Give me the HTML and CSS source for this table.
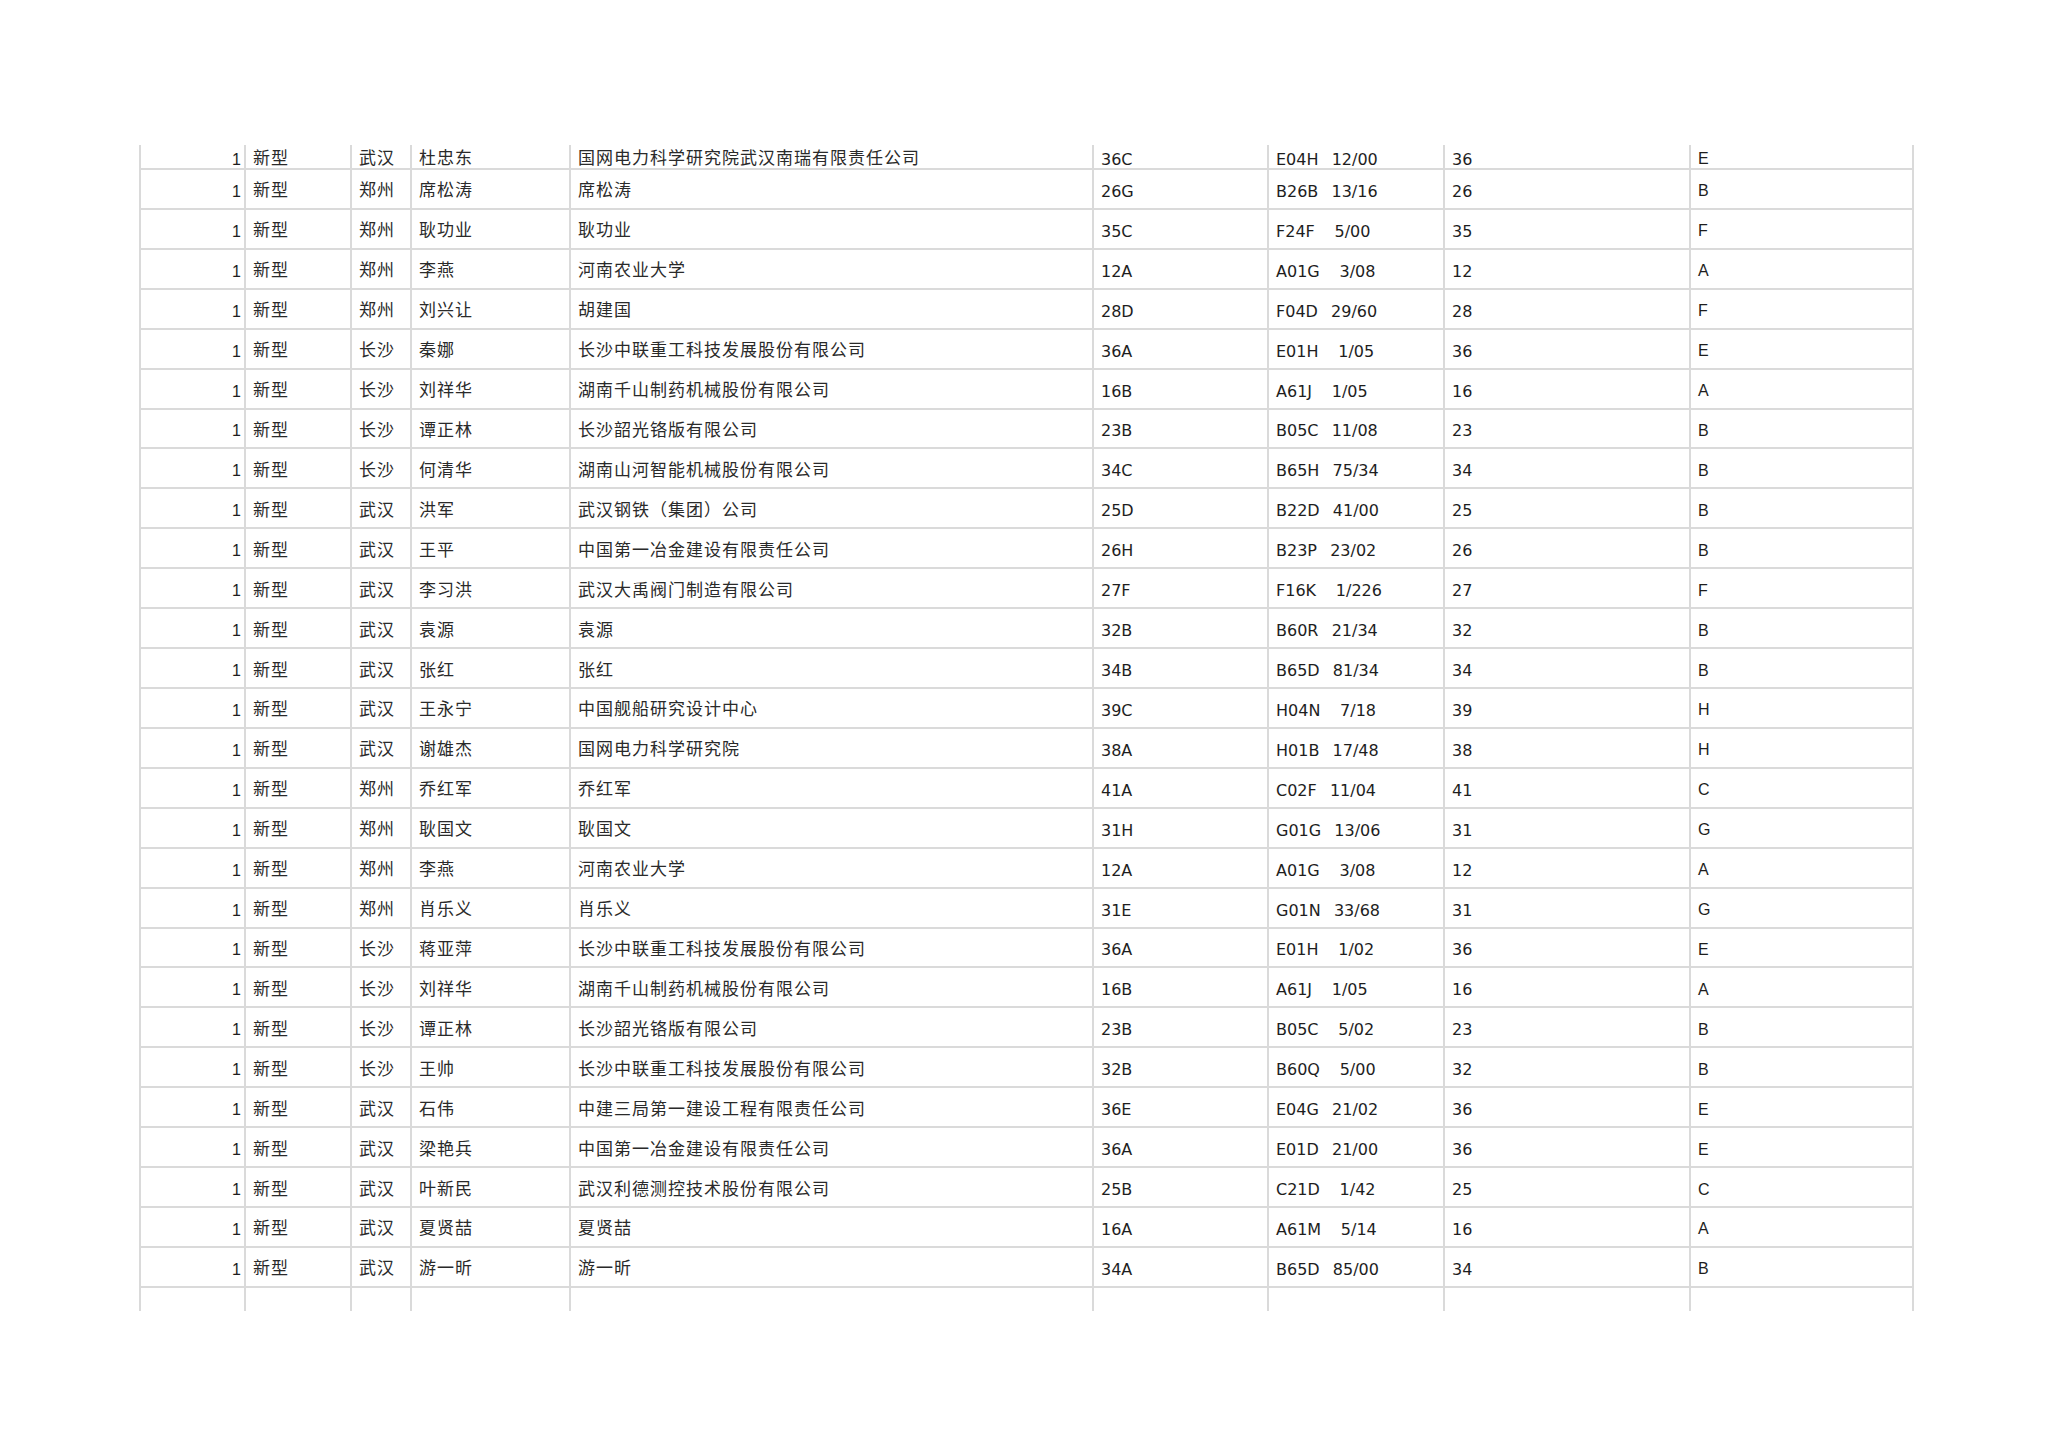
FILE: index.html
```html
<!DOCTYPE html>
<html lang="zh-CN">
<head>
<meta charset="utf-8">
<title>新型</title>
<link rel="stylesheet" href="styles.css">
</head>
<body>
<div class="page">
<div class="sheet">
<div class="row first"><div class="c num">1</div><div class="c cjk">新型</div><div class="c cjk">武汉</div><div class="c cjk">杜忠东</div><div class="c cjk">国网电力科学研究院武汉南瑞有限责任公司</div><div class="c lat">36C</div><div class="c lat">E04H  12/00</div><div class="c lat">36</div><div class="c ar">E</div></div>
<div class="row"><div class="c num">1</div><div class="c cjk">新型</div><div class="c cjk">郑州</div><div class="c cjk">席松涛</div><div class="c cjk">席松涛</div><div class="c lat">26G</div><div class="c lat">B26B  13/16</div><div class="c lat">26</div><div class="c ar">B</div></div>
<div class="row"><div class="c num">1</div><div class="c cjk">新型</div><div class="c cjk">郑州</div><div class="c cjk">耿功业</div><div class="c cjk">耿功业</div><div class="c lat">35C</div><div class="c lat">F24F   5/00</div><div class="c lat">35</div><div class="c ar">F</div></div>
<div class="row"><div class="c num">1</div><div class="c cjk">新型</div><div class="c cjk">郑州</div><div class="c cjk">李燕</div><div class="c cjk">河南农业大学</div><div class="c lat">12A</div><div class="c lat">A01G   3/08</div><div class="c lat">12</div><div class="c ar">A</div></div>
<div class="row"><div class="c num">1</div><div class="c cjk">新型</div><div class="c cjk">郑州</div><div class="c cjk">刘兴让</div><div class="c cjk">胡建国</div><div class="c lat">28D</div><div class="c lat">F04D  29/60</div><div class="c lat">28</div><div class="c ar">F</div></div>
<div class="row"><div class="c num">1</div><div class="c cjk">新型</div><div class="c cjk">长沙</div><div class="c cjk">秦娜</div><div class="c cjk">长沙中联重工科技发展股份有限公司</div><div class="c lat">36A</div><div class="c lat">E01H   1/05</div><div class="c lat">36</div><div class="c ar">E</div></div>
<div class="row"><div class="c num">1</div><div class="c cjk">新型</div><div class="c cjk">长沙</div><div class="c cjk">刘祥华</div><div class="c cjk">湖南千山制药机械股份有限公司</div><div class="c lat">16B</div><div class="c lat">A61J   1/05</div><div class="c lat">16</div><div class="c ar">A</div></div>
<div class="row"><div class="c num">1</div><div class="c cjk">新型</div><div class="c cjk">长沙</div><div class="c cjk">谭正林</div><div class="c cjk">长沙韶光铬版有限公司</div><div class="c lat">23B</div><div class="c lat">B05C  11/08</div><div class="c lat">23</div><div class="c ar">B</div></div>
<div class="row"><div class="c num">1</div><div class="c cjk">新型</div><div class="c cjk">长沙</div><div class="c cjk">何清华</div><div class="c cjk">湖南山河智能机械股份有限公司</div><div class="c lat">34C</div><div class="c lat">B65H  75/34</div><div class="c lat">34</div><div class="c ar">B</div></div>
<div class="row"><div class="c num">1</div><div class="c cjk">新型</div><div class="c cjk">武汉</div><div class="c cjk">洪军</div><div class="c cjk">武汉钢铁（集团）公司</div><div class="c lat">25D</div><div class="c lat">B22D  41/00</div><div class="c lat">25</div><div class="c ar">B</div></div>
<div class="row"><div class="c num">1</div><div class="c cjk">新型</div><div class="c cjk">武汉</div><div class="c cjk">王平</div><div class="c cjk">中国第一冶金建设有限责任公司</div><div class="c lat">26H</div><div class="c lat">B23P  23/02</div><div class="c lat">26</div><div class="c ar">B</div></div>
<div class="row"><div class="c num">1</div><div class="c cjk">新型</div><div class="c cjk">武汉</div><div class="c cjk">李习洪</div><div class="c cjk">武汉大禹阀门制造有限公司</div><div class="c lat">27F</div><div class="c lat">F16K   1/226</div><div class="c lat">27</div><div class="c ar">F</div></div>
<div class="row"><div class="c num">1</div><div class="c cjk">新型</div><div class="c cjk">武汉</div><div class="c cjk">袁源</div><div class="c cjk">袁源</div><div class="c lat">32B</div><div class="c lat">B60R  21/34</div><div class="c lat">32</div><div class="c ar">B</div></div>
<div class="row"><div class="c num">1</div><div class="c cjk">新型</div><div class="c cjk">武汉</div><div class="c cjk">张红</div><div class="c cjk">张红</div><div class="c lat">34B</div><div class="c lat">B65D  81/34</div><div class="c lat">34</div><div class="c ar">B</div></div>
<div class="row"><div class="c num">1</div><div class="c cjk">新型</div><div class="c cjk">武汉</div><div class="c cjk">王永宁</div><div class="c cjk">中国舰船研究设计中心</div><div class="c lat">39C</div><div class="c lat">H04N   7/18</div><div class="c lat">39</div><div class="c ar">H</div></div>
<div class="row"><div class="c num">1</div><div class="c cjk">新型</div><div class="c cjk">武汉</div><div class="c cjk">谢雄杰</div><div class="c cjk">国网电力科学研究院</div><div class="c lat">38A</div><div class="c lat">H01B  17/48</div><div class="c lat">38</div><div class="c ar">H</div></div>
<div class="row"><div class="c num">1</div><div class="c cjk">新型</div><div class="c cjk">郑州</div><div class="c cjk">乔红军</div><div class="c cjk">乔红军</div><div class="c lat">41A</div><div class="c lat">C02F  11/04</div><div class="c lat">41</div><div class="c ar">C</div></div>
<div class="row"><div class="c num">1</div><div class="c cjk">新型</div><div class="c cjk">郑州</div><div class="c cjk">耿国文</div><div class="c cjk">耿国文</div><div class="c lat">31H</div><div class="c lat">G01G  13/06</div><div class="c lat">31</div><div class="c ar">G</div></div>
<div class="row"><div class="c num">1</div><div class="c cjk">新型</div><div class="c cjk">郑州</div><div class="c cjk">李燕</div><div class="c cjk">河南农业大学</div><div class="c lat">12A</div><div class="c lat">A01G   3/08</div><div class="c lat">12</div><div class="c ar">A</div></div>
<div class="row"><div class="c num">1</div><div class="c cjk">新型</div><div class="c cjk">郑州</div><div class="c cjk">肖乐义</div><div class="c cjk">肖乐义</div><div class="c lat">31E</div><div class="c lat">G01N  33/68</div><div class="c lat">31</div><div class="c ar">G</div></div>
<div class="row"><div class="c num">1</div><div class="c cjk">新型</div><div class="c cjk">长沙</div><div class="c cjk">蒋亚萍</div><div class="c cjk">长沙中联重工科技发展股份有限公司</div><div class="c lat">36A</div><div class="c lat">E01H   1/02</div><div class="c lat">36</div><div class="c ar">E</div></div>
<div class="row"><div class="c num">1</div><div class="c cjk">新型</div><div class="c cjk">长沙</div><div class="c cjk">刘祥华</div><div class="c cjk">湖南千山制药机械股份有限公司</div><div class="c lat">16B</div><div class="c lat">A61J   1/05</div><div class="c lat">16</div><div class="c ar">A</div></div>
<div class="row"><div class="c num">1</div><div class="c cjk">新型</div><div class="c cjk">长沙</div><div class="c cjk">谭正林</div><div class="c cjk">长沙韶光铬版有限公司</div><div class="c lat">23B</div><div class="c lat">B05C   5/02</div><div class="c lat">23</div><div class="c ar">B</div></div>
<div class="row"><div class="c num">1</div><div class="c cjk">新型</div><div class="c cjk">长沙</div><div class="c cjk">王帅</div><div class="c cjk">长沙中联重工科技发展股份有限公司</div><div class="c lat">32B</div><div class="c lat">B60Q   5/00</div><div class="c lat">32</div><div class="c ar">B</div></div>
<div class="row"><div class="c num">1</div><div class="c cjk">新型</div><div class="c cjk">武汉</div><div class="c cjk">石伟</div><div class="c cjk">中建三局第一建设工程有限责任公司</div><div class="c lat">36E</div><div class="c lat">E04G  21/02</div><div class="c lat">36</div><div class="c ar">E</div></div>
<div class="row"><div class="c num">1</div><div class="c cjk">新型</div><div class="c cjk">武汉</div><div class="c cjk">梁艳兵</div><div class="c cjk">中国第一冶金建设有限责任公司</div><div class="c lat">36A</div><div class="c lat">E01D  21/00</div><div class="c lat">36</div><div class="c ar">E</div></div>
<div class="row"><div class="c num">1</div><div class="c cjk">新型</div><div class="c cjk">武汉</div><div class="c cjk">叶新民</div><div class="c cjk">武汉利德测控技术股份有限公司</div><div class="c lat">25B</div><div class="c lat">C21D   1/42</div><div class="c lat">25</div><div class="c ar">C</div></div>
<div class="row"><div class="c num">1</div><div class="c cjk">新型</div><div class="c cjk">武汉</div><div class="c cjk">夏贤喆</div><div class="c cjk">夏贤喆</div><div class="c lat">16A</div><div class="c lat">A61M   5/14</div><div class="c lat">16</div><div class="c ar">A</div></div>
<div class="row"><div class="c num">1</div><div class="c cjk">新型</div><div class="c cjk">武汉</div><div class="c cjk">游一昕</div><div class="c cjk">游一昕</div><div class="c lat">34A</div><div class="c lat">B65D  85/00</div><div class="c lat">34</div><div class="c ar">B</div></div>
<div class="row tail"><div class="c"></div><div class="c"></div><div class="c"></div><div class="c"></div><div class="c"></div><div class="c"></div><div class="c"></div><div class="c"></div><div class="c"></div></div>
</div>
</div>
</body>
</html>
```

FILE: styles.css
```css
html, body {
  margin: 0;
  padding: 0;
  background: #ffffff;
}

.page {
  padding: 145px 0 0 139px;
}

.sheet {
  width: 1775px;
  border-left: 2px solid #dadada;
  box-sizing: border-box;
}

.row {
  display: grid;
  grid-template-columns: 105px 106px 60px 159px 523px 175px 176px 246px 223px;
  height: 39.93px;
}

.row.first {
  height: 25px;
}

.row.tail {
  height: 23px;
}

.row.tail .c {
  border-bottom: none;
}

.c {
  box-sizing: border-box;
  border-right: 2px solid #dadada;
  border-bottom: 2px solid #dadada;
  display: flex;
  align-items: center;
  padding: 2px 0 0 7px;
  white-space: pre;
  overflow: hidden;
  color: #1e1e1e;
}

.num {
  justify-content: flex-end;
  padding-left: 0;
  padding-right: 3px;
  padding-top: 6px;
  font-family: "Liberation Sans", Arial, sans-serif;
  font-size: 16px;
}

.cjk {
  padding-top: 0;
  font-family: "Noto Sans CJK SC", sans-serif;
  font-size: 17px;
  letter-spacing: 1px;
  color: #2a2a2a;
}

.lat {
  padding-top: 5px;
  font-family: "DejaVu Sans", Verdana, sans-serif;
  font-size: 16px;
  word-spacing: 1.5px;
}

.ar {
  padding-top: 5px;
  font-family: "Liberation Sans", Arial, sans-serif;
  font-size: 16px;
}
```
